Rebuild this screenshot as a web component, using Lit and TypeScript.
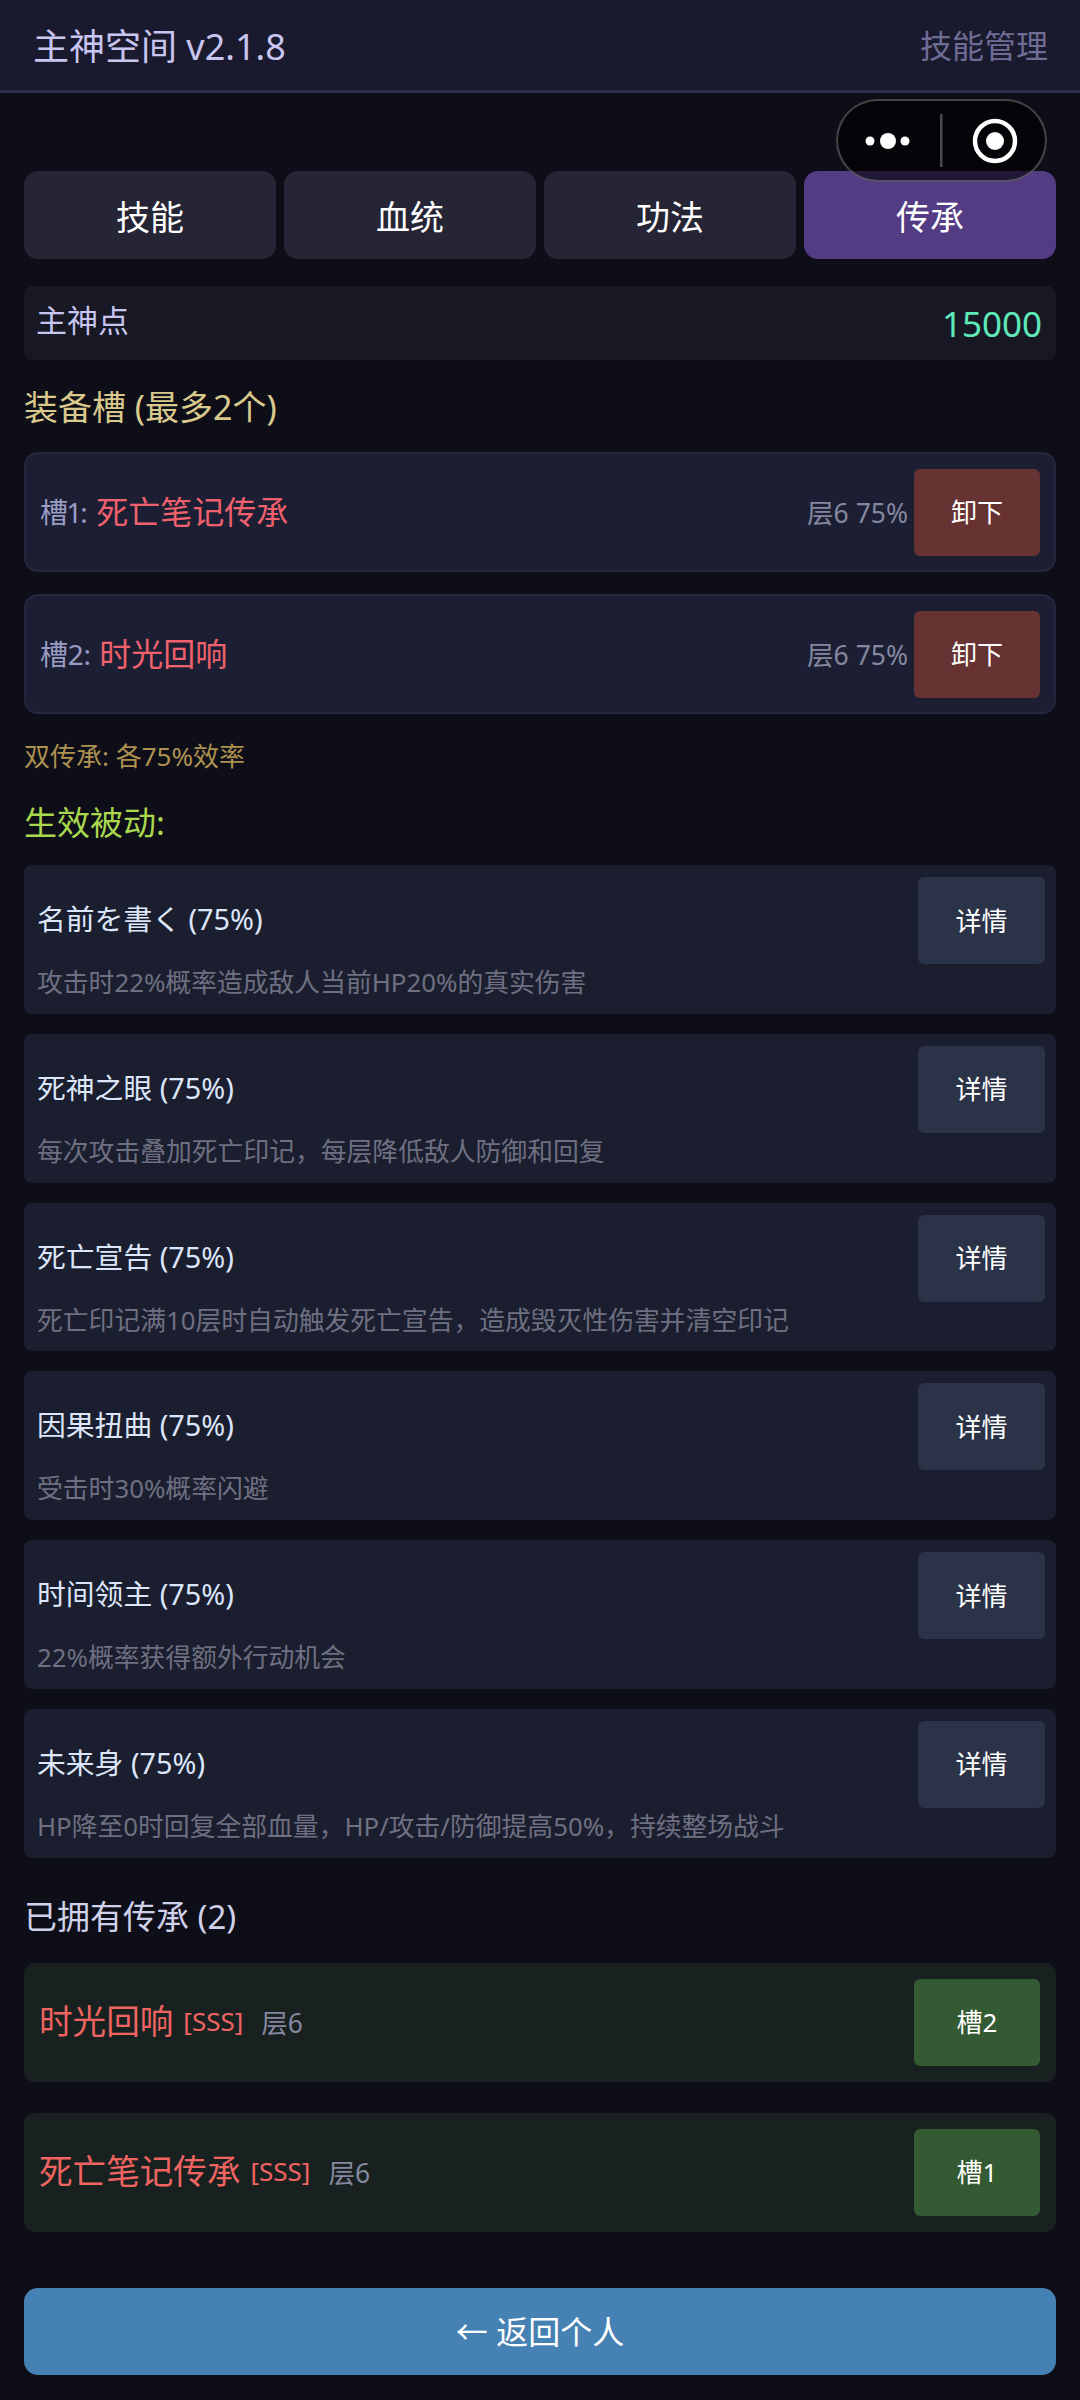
import { LitElement, html, css } from "lit";
import { customElement } from "lit/decorators.js";

const passives = [
  ["名前を書く (75%)", "攻击时22%概率造成敌人当前HP20%的真实伤害"],
  ["死神之眼 (75%)", "每次攻击叠加死亡印记，每层降低敌人防御和回复"],
  ["死亡宣告 (75%)", "死亡印记满10层时自动触发死亡宣告，造成毁灭性伤害并清空印记"],
  ["因果扭曲 (75%)", "受击时30%概率闪避"],
  ["时间领主 (75%)", "22%概率获得额外行动机会"],
  ["未来身 (75%)", "HP降至0时回复全部血量，HP/攻击/防御提高50%，持续整场战斗"],
];

@customElement("app-root")
export class AppRoot extends LitElement {
  static styles = css`
    :host {
      display: block;
      width: 1080px;
      height: 2400px;
      background: #0d0e18;
      font-family: "Noto Sans", "Noto Sans CJK SC", sans-serif;
      position: relative;
      overflow: hidden;
    }
    .header {
      height: 93px;
      box-sizing: border-box;
      background: #1a1a2e;
      border-bottom: 3px solid #2d2b4a;
      display: flex;
      justify-content: space-between;
      align-items: center;
      padding: 0 32px 2px 33px;
    }
    .title { font-size: 36px; color: #c8c6f0; }
    .manage { font-size: 32px; color: #6f6c96; }
    .capsule {
      position: absolute;
      left: 836px;
      top: 99px;
      width: 211px;
      height: 83px;
      box-sizing: border-box;
      border: 2px solid rgba(255, 255, 255, 0.25);
      border-radius: 42px;
      background: rgba(0, 0, 0, 0.6);
      display: flex;
      align-items: center;
    }
    .main { padding: 78px 24px 0; display: flex; flex-direction: column; }
    .tabs { display: flex; gap: 8px; }
    .tab {
      flex: 1;
      height: 88px;
      border-radius: 14px;
      background: #252536;
      color: #fff;
      font-size: 34px;
      display: flex;
      align-items: center;
      justify-content: center;
    }
    .tab.on { background: #533c84; }
    .points {
      margin-top: 27px;
      height: 74px;
      background: #181825;
      border-radius: 8px;
      display: flex;
      justify-content: space-between;
      align-items: center;
      padding: 0 14px 0 12px;
    }
    .points .l { font-size: 31px; color: #c8c6f0; margin-top: -9px; }
    .points .v { font-size: 35px; color: #5fe8b8; }
    .h-gold { margin-top: 24px; font-size: 34px; line-height: 46px; color: #d9c98c; }
    .slot {
      margin-top: 22px;
      height: 120px;
      box-sizing: border-box;
      background: #1c1f33;
      border: 2px solid #25273e;
      border-radius: 14px;
      display: flex;
      align-items: center;
      padding: 0 14px;
    }
    .slot .label {
      font-size: 28px;
      color: #9a9cc4;
      font-variant-numeric: proportional-nums;
      margin-top: -3px;
    }
    .red { color: #f0616d; }
    .slot .name { font-size: 32px; margin-top: -5px; }
    .spacer { flex: 1; }
    .slot .meta { font-size: 26.5px; color: #85879f; margin-right: 6px; margin-top: -2px; }
    .btn {
      width: 126px;
      box-sizing: border-box;
      padding-bottom: 2px;
      border-radius: 6px;
      color: #fff;
      font-size: 26px;
      display: flex;
      align-items: center;
      justify-content: center;
    }
    .slot .btn { height: 87px; background: #663232; }
    .note { margin-top: 25px; font-size: 26px; line-height: 34px; color: #ae9150; }
    .h-green { margin-top: 28px; font-size: 33px; line-height: 44px; color: #a9d84e; }
    .passives { margin-top: 20px; display: flex; flex-direction: column; gap: 20px; }
    .card {
      height: 148.8px;
      box-sizing: border-box;
      background: #1b1e2e;
      border-radius: 8px;
      padding: 12px 11px 0 13px;
    }
    .card .top { display: flex; justify-content: space-between; align-items: center; }
    .card .n { font-size: 28.8px; color: #dce6fa; margin-top: -6px; }
    .card .btn { width: 127px; height: 87px; background: #2a3347; font-size: 26px; }
    .card .d { font-size: 25.8px; line-height: 34px; color: #6e7082; margin-top: 1px; }
    .h-owned { margin-top: 37px; font-size: 33px; line-height: 44px; color: #d0d1ea; }
    .own {
      height: 119px;
      background: #182020;
      border-radius: 10px;
      display: flex;
      align-items: center;
      padding: 0 16px 0 15px;
      margin-top: 31px;
    }
    .h-owned + .own { margin-top: 24px; }
    .own .name { font-size: 33.6px; color: #ef6461; margin-top: -5px; }
    .own .r { font-size: 26px; color: #ef6461; margin-left: 10px; margin-top: -2px; }
    .own .f { font-size: 26.5px; color: #85879f; margin-left: 18px; margin-top: -2px; }
    .own .btn { height: 87px; background: #335a32; }
    .back {
      margin-top: 56px;
      height: 87px;
      box-sizing: border-box;
      padding-bottom: 3px;
      border-radius: 14px;
      background: #4681b4;
      color: #fff;
      font-size: 32px;
      display: flex;
      align-items: center;
      justify-content: center;
    }
  `;

  render() {
    return html`
      <div class="header">
        <span class="title">主神空间 v2.1.8</span>
        <span class="manage">技能管理</span>
      </div>
      <div class="capsule">
        <svg width="207" height="79" viewBox="0 0 207 79">
          <circle cx="32" cy="40" r="4.5" fill="#fff"></circle>
          <circle cx="50" cy="40" r="8" fill="#fff"></circle>
          <circle cx="67" cy="40" r="4.5" fill="#fff"></circle>
          <rect x="102" y="13" width="2.5" height="53" fill="#4a4a4f"></rect>
          <circle cx="157" cy="40" r="20" fill="none" stroke="#fff" stroke-width="4.5"></circle>
          <circle cx="157" cy="40" r="9" fill="#fff"></circle>
        </svg>
      </div>
      <div class="main">
        <div class="tabs">
          <div class="tab">技能</div>
          <div class="tab">血统</div>
          <div class="tab">功法</div>
          <div class="tab on">传承</div>
        </div>
        <div class="points"><span class="l">主神点</span><span class="v">15000</span></div>
        <div class="h-gold">装备槽 (最多2个)</div>
        <div class="slot">
          <span class="label">槽1:</span><span class="name red">&nbsp;死亡笔记传承</span>
          <span class="spacer"></span><span class="meta">层6 75%</span>
          <div class="btn">卸下</div>
        </div>
        <div class="slot">
          <span class="label">槽2:</span><span class="name red">&nbsp;时光回响</span>
          <span class="spacer"></span><span class="meta">层6 75%</span>
          <div class="btn">卸下</div>
        </div>
        <div class="note">双传承: 各75%效率</div>
        <div class="h-green">生效被动:</div>
        <div class="passives">
          ${passives.map(
            ([n, d]) => html`
              <div class="card">
                <div class="top"><span class="n">${n}</span><div class="btn">详情</div></div>
                <div class="d">${d}</div>
              </div>
            `
          )}
        </div>
        <div class="h-owned">已拥有传承 (2)</div>
        <div class="own">
          <span class="name">时光回响</span><span class="r">[SSS]</span><span class="f">层6</span>
          <span class="spacer"></span><div class="btn">槽2</div>
        </div>
        <div class="own">
          <span class="name">死亡笔记传承</span><span class="r">[SSS]</span><span class="f">层6</span>
          <span class="spacer"></span><div class="btn">槽1</div>
        </div>
        <div class="back">← 返回个人</div>
      </div>
    `;
  }
}
